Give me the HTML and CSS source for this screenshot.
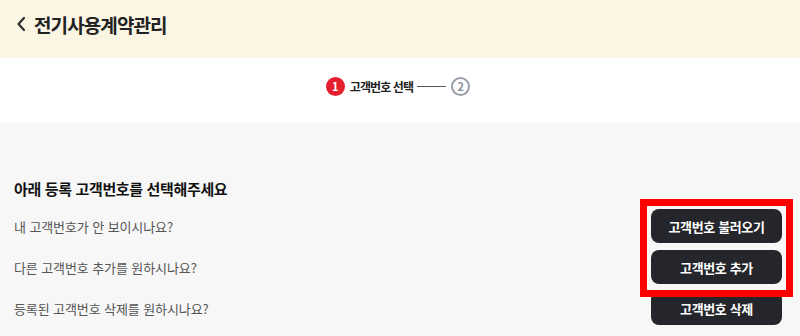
FILE: index.html
```html
<!DOCTYPE html>
<html lang="ko">
<head>
<meta charset="utf-8">
<link rel="stylesheet" href="styles.css">
</head>
<body>
<div class="page">
  <header class="topbar">
    <svg class="back" width="10" height="16" viewBox="0 0 10 16"><path d="M8 2 L2.5 8 L8 14" fill="none" stroke="#2b2b2b" stroke-width="2.2" stroke-linecap="round" stroke-linejoin="round"/></svg>
    <h1 class="title">전기사용계약관리</h1>
  </header>
  <div class="stepper">
    <span class="step-num active">1</span>
    <span class="step-label">고객번호 선택</span>
    <span class="step-line"></span>
    <span class="step-num idle">2</span>
  </div>
  <main class="content">
    <h2 class="heading">아래 등록 고객번호를 선택해주세요</h2>
    <div class="rows">
      <div class="row"><span class="q">내 고객번호가 안 보이시나요?</span><button class="btn">고객번호 불러오기</button></div>
      <div class="row"><span class="q">다른 고객번호 추가를 원하시나요?</span><button class="btn">고객번호 추가</button></div>
      <div class="row"><span class="q">등록된 고객번호 삭제를 원하시나요?</span><button class="btn">고객번호 삭제</button></div>
    </div>
  </main>
  <div class="highlight"></div>
</div>
</body>
</html>
```
FILE: styles.css
```css
* { box-sizing: border-box; margin: 0; padding: 0; }
html, body { width: 800px; height: 336px; overflow: hidden; }
body { font-family: "Noto Sans CJK KR", "Noto Sans", sans-serif; background: #f7f7f7; }
.page { position: relative; width: 800px; height: 336px; }
.topbar { height: 58px; background: #fbf5e3; display: flex; align-items: center; padding: 0 0 10px 16px; gap: 8px; }
.back { display: block; }
.title { font-size: 19px; font-weight: 700; color: #222; letter-spacing: -0.9px; line-height: 1; }
.stepper { height: 65px; background: #fff; display: flex; justify-content: center; align-items: flex-start; padding-top: 19px; padding-right: 4px; }
.step-num { width: 19px; height: 19px; border-radius: 50%; display: flex; align-items: center; justify-content: center; font-size: 11px; font-weight: 700; line-height: 1; }
.step-num.active { background: #e5202e; color: #fff; }
.step-num.idle { border: 2px solid #9aa0aa; color: #8a909a; background: #fff; }
.step-label { font-size: 12px; font-weight: 700; color: #222; letter-spacing: -0.9px; margin-left: 5px; line-height: 19px; }
.step-line { width: 29px; height: 1px; background: #555; margin: 9px 5px 0 4px; }
.content { padding: 55px 18px 0 14px; }
.heading { font-size: 15px; font-weight: 700; color: #111; letter-spacing: -0.35px; line-height: 22px; margin-bottom: 9px; }
.rows { display: flex; flex-direction: column; gap: 7px; }
.row { display: flex; justify-content: space-between; align-items: center; height: 34px; }
.q { font-size: 13px; color: #555; letter-spacing: -0.1px; }
.btn { width: 131px; height: 34px; border: none; border-radius: 8px; background: #25262b; color: #fff; font-family: inherit; font-size: 13px; font-weight: 700; letter-spacing: -0.35px; }
.highlight { position: absolute; left: 640px; top: 199px; width: 153px; height: 98px; border: 7px solid #ff0000; }
```
